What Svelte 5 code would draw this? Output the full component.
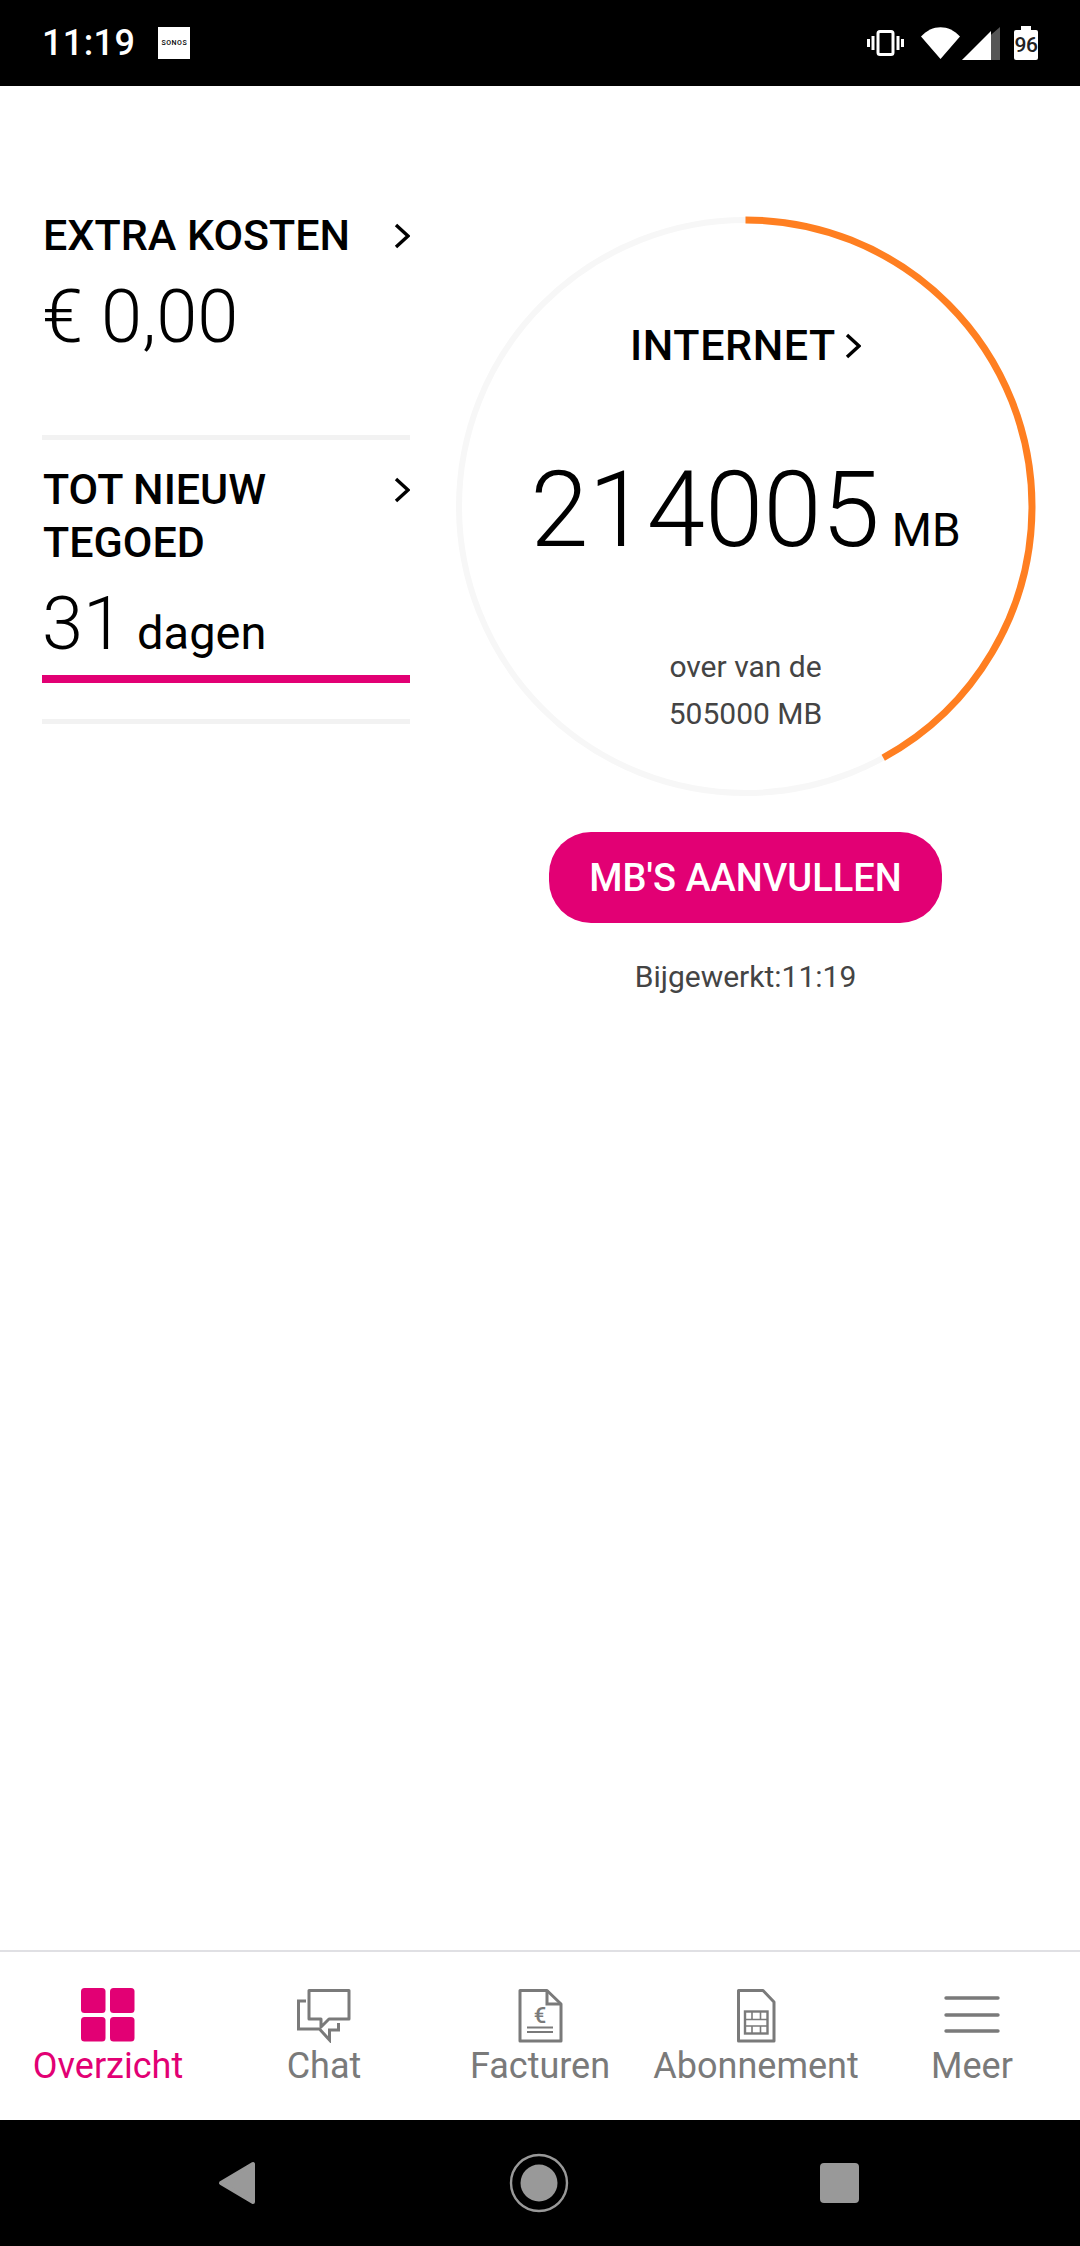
<script>
	const r = 286.5
	const circ = 2 * Math.PI * r
	// the app draws the arc a bit short of the real 214005/505000
	const dash = 0.42 * circ

	const tabs = [
		{ key: 'overzicht', label: 'Overzicht' },
		{ key: 'chat', label: 'Chat' },
		{ key: 'facturen', label: 'Facturen' },
		{ key: 'abonnement', label: 'Abonnement' },
		{ key: 'meer', label: 'Meer' }
	]
</script>

{#snippet chevron()}
	<svg class="chev" width="16" height="26" viewBox="0 0 16 26">
		<path d="M2 2 L14 13 L2 24" fill="none" stroke="#000" stroke-width="3.4" />
	</svg>
{/snippet}

<div class="page">
	<header class="status">
		<div class="status-left">
			<span class="time">11:19</span>
			<span class="sonos">SONOS</span>
		</div>
		<div class="status-right">
			<svg width="37" height="26" viewBox="0 0 37 26" fill="none" stroke="#fff" stroke-width="3">
				<rect x="11" y="1.5" width="15" height="23" rx="2" />
				<path d="M6 6 V20 M1.5 9 V17 M31 6 V20 M35.5 9 V17" />
			</svg>
			<svg class="wifi" width="39" height="32" viewBox="0 0 39 32">
				<path d="M0 9.5 C11 -3 28 -3 39 9.5 L19.5 32 Z" fill="#fff" />
			</svg>
			<svg class="signal" width="38" height="33" viewBox="0 0 38 33">
				<path d="M38 0 V33 H0 Z" fill="#555" />
				<path d="M29 9.5 V33 H0 L29 4 Z" fill="#fff" />
			</svg>
			<div class="battery">
				<span class="battery-cap"></span>
				<span class="battery-body">96</span>
			</div>
		</div>
	</header>

	<main class="content">
		<section class="left">
			<div class="title-row">
				<div class="title">EXTRA KOSTEN</div>
				{@render chevron()}
			</div>
			<div class="value first">€ 0,00</div>
			<div class="rule first-rule"></div>

			<div class="title-row second">
				<div class="title">TOT NIEUW TEGOED</div>
				{@render chevron()}
			</div>
			<div class="value days">31<span class="unit">dagen</span></div>
			<div class="bar"></div>
			<div class="rule last-rule"></div>
		</section>

		<section class="right">
			<div class="gauge">
				<svg class="ring" width="579" height="579" viewBox="0 0 579 579">
					<circle cx="289.5" cy="289.5" {r} fill="none" stroke="#f7f7f7" stroke-width="6" />
					<circle
						cx="289.5"
						cy="289.5"
						{r}
						fill="none"
						stroke="#ff7f21"
						stroke-width="7"
						stroke-dasharray="{dash} {circ}"
						transform="rotate(-90 289.5 289.5)"
					/>
				</svg>
				<div class="gauge-title">
					<span>INTERNET</span>
					{@render chevron()}
				</div>
				<div class="amount">
					<span class="big">214005</span>
					<span class="mb">MB</span>
				</div>
				<div class="sub">over van de<br />505000 MB</div>
			</div>
			<button class="topup">MB'S AANVULLEN</button>
			<div class="updated">Bijgewerkt:11:19</div>
		</section>
	</main>

	<nav class="tabs">
		{#each tabs as tab, i}
			<div class="tab" class:active={i === 0}>
				{#if tab.key === 'overzicht'}
					<svg width="60" height="56" viewBox="0 0 60 56" fill="#e20074">
						<rect x="3" y="1" width="24.5" height="25" rx="3.5" />
						<rect x="32" y="1" width="24.5" height="25" rx="3.5" />
						<rect x="3" y="30" width="24.5" height="24.5" rx="3.5" />
						<rect x="32" y="30" width="24.5" height="24.5" rx="3.5" />
					</svg>
				{:else if tab.key === 'chat'}
					<svg width="60" height="56" viewBox="14 12 60 56" fill="none" stroke="#7a7a7a" stroke-width="3">
						<path d="M29 15.5 H69 V44 H49 L41 52 V44 H29 Z" stroke-linejoin="round" />
						<path d="M26 26 H18.5 V54 H39.5 L49.5 65 V55 H58.5 V48" />
					</svg>
				{:else if tab.key === 'facturen'}
					<svg width="60" height="56" viewBox="10 12 60 56" fill="none" stroke="#7a7a7a" stroke-width="3">
						<path d="M20 15.5 H47 L61 29 V66 H20 Z" stroke-linejoin="round" />
						<path d="M47 15.5 V29 H61" />
						<path d="M27 52.5 H53 M27 57 H53" stroke-width="2" />
						<text x="40" y="48" text-anchor="middle" class="euro">€</text>
					</svg>
				{:else if tab.key === 'abonnement'}
					<svg width="60" height="56" viewBox="6 12 60 56" fill="none" stroke="#7a7a7a" stroke-width="3">
						<path d="M18.5 15.5 H43 L54 27 V66 H18.5 Z" stroke-linejoin="round" />
						<rect x="25" y="36.5" width="22.5" height="22" stroke-width="2.4" />
						<path d="M25 44.5 H47.5 M25 51 H47.5 M32 36.5 V44.5 M40.5 36.5 V44.5 M32 51 V58.5 M40.5 51 V58.5" stroke-width="1.6" />
					</svg>
				{:else}
					<svg width="60" height="56" viewBox="0 0 60 56" fill="none" stroke="#7a7a7a" stroke-width="3.4" stroke-linecap="round">
						<path d="M4 11 H56 M4 28 H56 M4 44 H56" />
					</svg>
				{/if}
				<span class="tab-label">{tab.label}</span>
			</div>
		{/each}
	</nav>

	<footer class="navbar">
		<svg width="40" height="44" viewBox="0 0 40 44">
			<path d="M35 3 V41 L3 22 Z" fill="#999" stroke="#999" stroke-width="4" stroke-linejoin="round" />
		</svg>
		<svg width="60" height="60" viewBox="0 0 60 60">
			<circle cx="30" cy="30" r="28" fill="none" stroke="#999" stroke-width="2.4" />
			<circle cx="30" cy="30" r="18.5" fill="#999" />
		</svg>
		<div class="square"></div>
	</footer>
</div>

<style>
	:global(body) {
		margin: 0;
		background: #fff;
	}
	.page {
		width: 1080px;
		height: 2246px;
		display: flex;
		flex-direction: column;
		font-family: Roboto, "Liberation Sans", sans-serif;
		color: #000;
	}

	/* status bar */
	.status {
		height: 86px;
		background: #000;
		display: flex;
		justify-content: space-between;
		align-items: center;
		padding: 0 42px 0 42px;
		box-sizing: border-box;
		color: #fff;
	}
	.status-left {
		display: flex;
		align-items: center;
		gap: 23px;
	}
	.time {
		font-size: 36px;
		font-weight: 500;
		letter-spacing: 0.4px;
	}
	.sonos {
		width: 32px;
		height: 32px;
		background: #fff;
		color: #000;
		font-size: 7px;
		font-weight: 500;
		letter-spacing: 0.5px;
		display: flex;
		align-items: center;
		justify-content: center;
	}
	.status-right {
		display: flex;
		align-items: center;
		gap: 19px;
	}
	.wifi {
		margin-right: -17px;
		margin-left: -2px;
	}
	.signal {
		margin-right: -5px;
	}
	.battery {
		width: 24px;
		height: 34px;
		display: flex;
		flex-direction: column;
		align-items: center;
	}
	.battery-cap {
		width: 10px;
		height: 4px;
		background: #fff;
	}
	.battery-body {
		width: 24px;
		height: 30px;
		background: #fff;
		border-radius: 2px;
		color: #222;
		font-size: 21px;
		font-weight: 500;
		line-height: 30px;
		text-align: center;
		letter-spacing: -0.5px;
	}

	/* main area */
	.content {
		flex: 1;
		display: flex;
		padding-left: 42px;
		gap: 46px;
	}
	.left {
		width: 368px;
		padding-top: 123px;
	}
	.title-row {
		display: flex;
		justify-content: space-between;
		align-items: flex-start;
	}
	.title {
		font-size: 43px;
		font-weight: 500;
		line-height: 53px;
		width: 340px;
		margin-left: 1px;
	}
	.chev {
		display: block;
		flex: none;
		margin-top: 14px;
	}
	.value {
		font-size: 74px;
		font-weight: 300;
		line-height: 80px;
		margin-top: 15px;
	}
	.first-rule {
		margin-top: 78px;
	}
	.rule {
		height: 5px;
		background: #f2f2f2;
	}
	.second {
		margin-top: 23px;
	}
	.unit {
		font-size: 47px;
		font-weight: 400;
		line-height: 1;
		margin-left: 13px;
	}
	.bar {
		height: 8px;
		margin-top: 11px;
		background: #e20074;
	}
	.last-rule {
		margin-top: 36px;
	}

	.right {
		width: 579px;
		padding-top: 131px;
		display: flex;
		flex-direction: column;
		align-items: center;
	}
	.gauge {
		position: relative;
		width: 579px;
		height: 579px;
		padding-top: 102px;
		box-sizing: border-box;
		display: flex;
		flex-direction: column;
		align-items: center;
	}
	.ring {
		position: absolute;
		left: 0;
		top: 0;
		overflow: visible;
	}
	.gauge-title {
		display: flex;
		align-items: center;
		gap: 9px;
		font-size: 43px;
		font-weight: 500;
		line-height: 53px;
		letter-spacing: 0.6px;
	}
	.gauge-title .chev {
		margin-top: 0;
	}
	.amount {
		display: flex;
		align-items: baseline;
		gap: 12px;
		margin-top: 79px;
		line-height: 120px;
	}
	.big {
		font-size: 105px;
		font-weight: 300;
	}
	.mb {
		font-size: 46px;
		font-weight: 400;
	}
	.sub {
		margin-top: 53px;
		font-size: 30px;
		line-height: 47px;
		text-align: center;
		color: #444;
	}
	.topup {
		margin-top: 36px;
		width: 393px;
		height: 91px;
		border: none;
		border-radius: 42px;
		background: #e20074;
		color: #fff;
		font-family: inherit;
		font-size: 38px;
		font-weight: 500;
		letter-spacing: 0;
		padding: 0;
	}
	.updated {
		margin-top: 36px;
		font-size: 30px;
		line-height: 36px;
		color: #444;
	}

	/* bottom tabs */
	.tabs {
		height: 170px;
		border-top: 2px solid #e0e0e4;
		box-sizing: border-box;
		display: flex;
		padding-top: 35px;
		background: #fff;
	}
	.tab {
		width: 216px;
		display: flex;
		flex-direction: column;
		align-items: center;
		color: #7a7a7a;
	}
	.tab svg {
		display: block;
	}
	.tab-label {
		font-size: 36px;
		line-height: 42px;
		margin-top: 2px;
	}
	.tab.active {
		color: #e20074;
	}
	.euro {
		font-family: Roboto, sans-serif;
		font-size: 22px;
		font-weight: 500;
		fill: #7a7a7a;
		stroke: none;
	}

	/* android nav */
	.navbar {
		height: 126px;
		background: #000;
		display: flex;
		justify-content: center;
		align-items: center;
		gap: 251px;
		padding-right: 4px;
	}
	.square {
		width: 39px;
		height: 40px;
		border-radius: 4px;
		background: #999;
	}
</style>
